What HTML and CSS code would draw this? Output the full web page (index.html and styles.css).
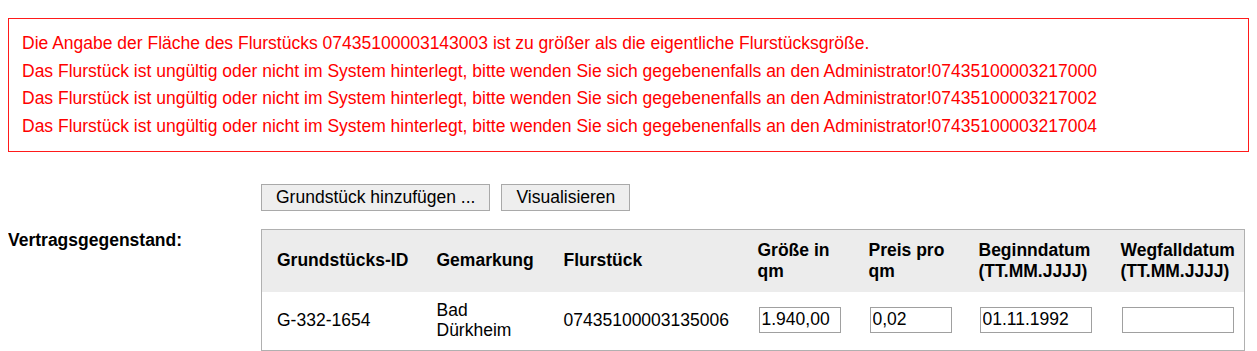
FILE: index.html
```html
<!DOCTYPE html>
<html>
<head>
    <meta charset="utf-8">
    <title>Vertragsgegenstand</title>
    <link rel="stylesheet" href="styles.css">
</head>
<body>
    <div class="errors">
        <div>Die Angabe der Fläche des Flurstücks 07435100003143003 ist zu größer als die eigentliche Flurstücksgröße.</div>
        <div>Das Flurstück ist ungültig oder nicht im System hinterlegt, bitte wenden Sie sich gegebenenfalls an den Administrator!07435100003217000</div>
        <div>Das Flurstück ist ungültig oder nicht im System hinterlegt, bitte wenden Sie sich gegebenenfalls an den Administrator!07435100003217002</div>
        <div>Das Flurstück ist ungültig oder nicht im System hinterlegt, bitte wenden Sie sich gegebenenfalls an den Administrator!07435100003217004</div>
    </div>

    <div class="form">
        <div class="label"></div>
        <div class="buttons">
            <button type="button">Grundstück hinzufügen ...</button>
            <button type="button">Visualisieren</button>
        </div>

        <div class="label">Vertragsgegenstand:</div>
        <table class="parcels">
            <colgroup>
                <col style="width: 160px">
                <col style="width: 127px">
                <col style="width: 194px">
                <col style="width: 111px">
                <col style="width: 110px">
                <col style="width: 142px">
                <col>
            </colgroup>
            <tr>
                <th>Grundstücks-ID</th>
                <th>Gemarkung</th>
                <th>Flurstück</th>
                <th>Größe in qm</th>
                <th>Preis pro qm</th>
                <th>Beginndatum (TT.MM.JJJJ)</th>
                <th>Wegfalldatum (TT.MM.JJJJ)</th>
            </tr>
            <tr>
                <td>G-332-1654</td>
                <td>Bad Dürkheim</td>
                <td>07435100003135006</td>
                <td><input type="text" class="short" value="1.940,00"></td>
                <td><input type="text" class="short" value="0,02"></td>
                <td><input type="text" class="date" value="01.11.1992"></td>
                <td><input type="text" class="date" value=""></td>
            </tr>
        </table>
    </div>
</body>
</html>
```

FILE: styles.css
```css
html {
    overflow: hidden;
}

body {
    font-family: "Liberation Sans", Arial, sans-serif;
    font-size: 17.5px;
    margin: 8px;
    color: #000;
    background-color: #fff;
}

.errors {
    border: 1px solid #ff1a1a;
    color: #ff0000;
    margin: 10px 0 0 0;
    padding: 11px 13px 10px 13px;
    line-height: 27.7px;
}

.form {
    display: grid;
    grid-template-columns: 253px 1fr;
    margin-top: 32px;
    row-gap: 18px;
}

.label {
    font-weight: bold;
    line-height: 20px;
    padding-top: 1px;
}

.buttons {
    display: flex;
    gap: 11px;
}

button {
    font-family: "Liberation Sans", Arial, sans-serif;
    font-size: 17.5px;
    height: 27px;
    padding: 0 14px;
    background-color: #eeeeee;
    border: 1px solid #a9a9a9;
    color: #000;
}

.parcels {
    table-layout: fixed;
    width: calc(100% - 4px);
    border-collapse: collapse;
    border: 1px solid #b0b0b0;
}

.parcels th {
    background-color: #ececec;
    text-align: left;
    font-weight: bold;
    line-height: 21px;
    padding: 10px 8px 10px 15px;
    vertical-align: middle;
}

.parcels td {
    line-height: 20px;
    padding: 8px 8px 10px 15px;
    vertical-align: middle;
}

.parcels input {
    font-family: "Liberation Sans", Arial, sans-serif;
    font-size: 17.5px;
    height: 26px;
    box-sizing: border-box;
    border: 1px solid #a0a0a0;
    padding: 1px 2px;
    margin: 0 0 0 1px;
}

.parcels input.short {
    width: 82px;
}

.parcels input.date {
    width: 112px;
}
```
